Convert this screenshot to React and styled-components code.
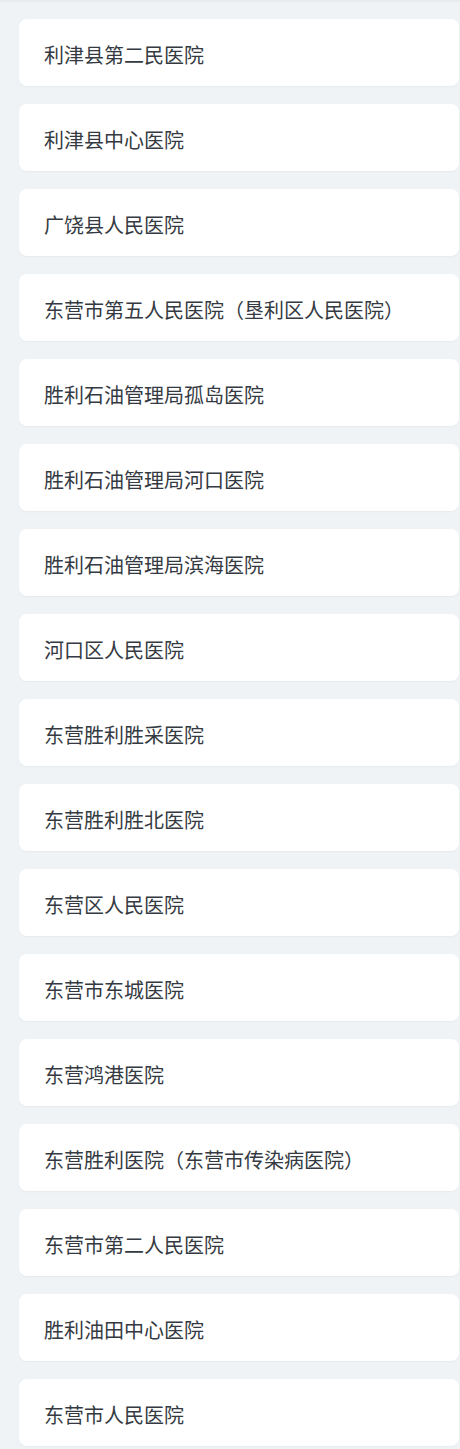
import React from 'react';
import styled, { createGlobalStyle } from 'styled-components';

const GlobalStyle = createGlobalStyle`
  html, body {
    margin: 0;
    padding: 0;
    background: #eff3f6;
  }
  body {
    font-family: "Noto Sans CJK SC", "Noto Sans", sans-serif;
  }
`;

const Page = styled.div`
  width: 460px;
  min-height: 1449px;
  box-sizing: border-box;
  background: #eff3f6;
  border-top: 2px solid #e7ebee;
  padding: 17px 1px 0 19px;
`;

const List = styled.ul`
  list-style: none;
  margin: 0;
  padding: 0;
  display: flex;
  flex-direction: column;
  gap: 18px;
`;

const Card = styled.li`
  height: 67px;
  box-sizing: border-box;
  background: #ffffff;
  border-radius: 8px;
  box-shadow: 0 1px 2px rgba(0, 0, 0, 0.04);
  display: flex;
  align-items: center;
  padding: 3px 0 0 25px;
  font-size: 20px;
  color: #353a42;
  cursor: pointer;
`;

const hospitals = [
  '利津县第二民医院',
  '利津县中心医院',
  '广饶县人民医院',
  '东营市第五人民医院（垦利区人民医院）',
  '胜利石油管理局孤岛医院',
  '胜利石油管理局河口医院',
  '胜利石油管理局滨海医院',
  '河口区人民医院',
  '东营胜利胜采医院',
  '东营胜利胜北医院',
  '东营区人民医院',
  '东营市东城医院',
  '东营鸿港医院',
  '东营胜利医院（东营市传染病医院）',
  '东营市第二人民医院',
  '胜利油田中心医院',
  '东营市人民医院',
];

export default function App() {
  return (
    <>
      <GlobalStyle />
      <Page>
        <List>
          {hospitals.map((name) => (
            <Card key={name}>{name}</Card>
          ))}
        </List>
      </Page>
    </>
  );
}
